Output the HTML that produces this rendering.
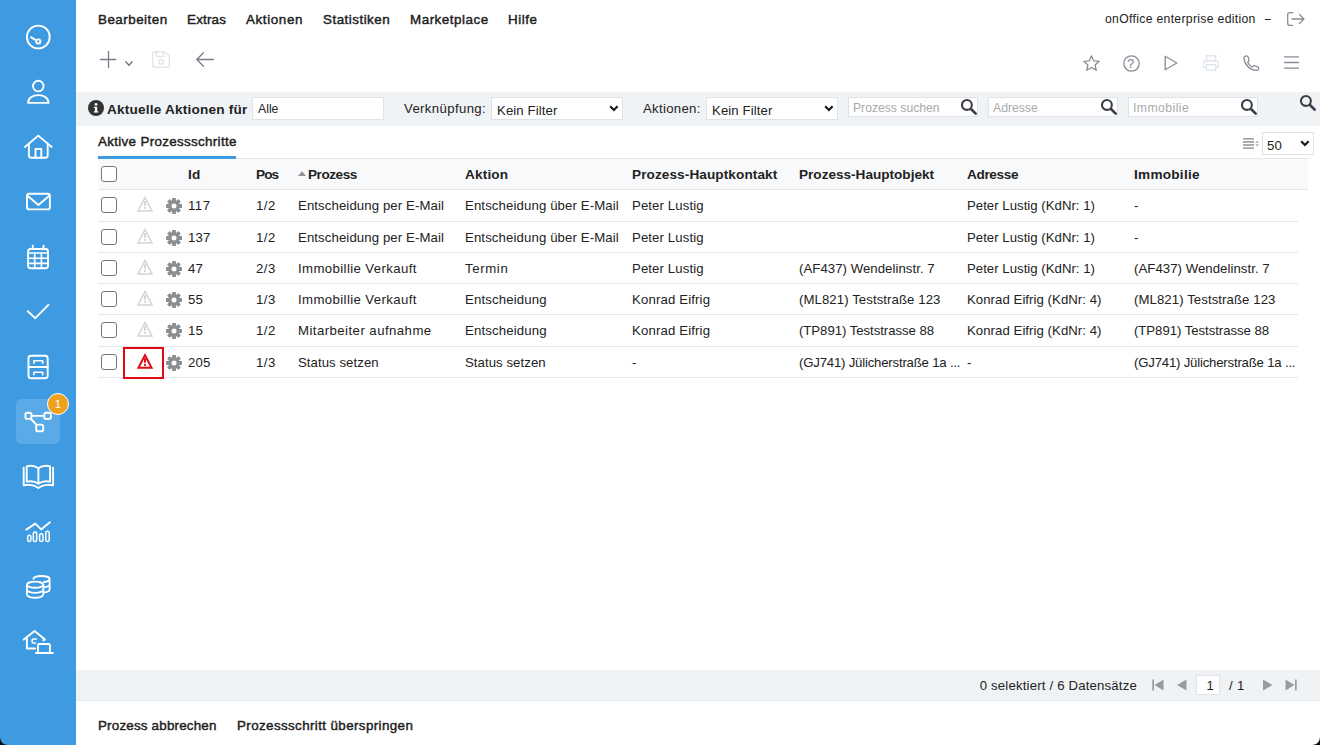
<!DOCTYPE html>
<html lang="de">
<head>
<meta charset="utf-8">
<title>onOffice enterprise edition</title>
<style>
*{box-sizing:border-box;margin:0;padding:0}
html,body{width:1320px;height:745px;overflow:hidden;background:#fff}
body{font-family:"Liberation Sans",sans-serif;font-size:13.2px;letter-spacing:.1px;color:#222;position:relative}
.abs{position:absolute}
#side{position:absolute;left:0;top:0;width:76px;height:745px;background:#3e9be1}
#side svg{position:absolute;overflow:visible;fill:none;stroke:#fff;stroke-width:1.9;stroke-linecap:round;stroke-linejoin:round}
#active{position:absolute;left:16px;top:399px;width:44px;height:45px;border-radius:5px;background:#5aaae7}
#badge{position:absolute;left:47px;top:393px;width:22px;height:22px;border:1px solid #fff;border-radius:50%;background:#f0a11e;color:#fff;font-size:11.5px;line-height:20px;text-align:center;letter-spacing:0}
.t{position:absolute;white-space:nowrap;line-height:16px;margin-top:1px}
.sb{font-weight:400;font-size:13.4px;letter-spacing:.32px;-webkit-text-stroke:.42px #1c1c1c}
.b{font-weight:700;font-size:13.6px;letter-spacing:0}
#filter{position:absolute;left:76px;top:92px;width:1244px;height:34px;background:#f0f3f6}
.inp{position:absolute;background:#fff;border:1px solid #dfe3e8;}
.ph{color:#a9a9a9}
#thead{position:absolute;left:98px;top:159px;width:1210px;height:31px;background:#f8f9fa;border-bottom:1px solid #e3e7eb}
.rl{position:absolute;left:98px;width:1200px;height:1px;background:#e3e7eb}
.cb{position:absolute;left:101px;width:16px;height:16px;border:1.4px solid #767676;border-radius:3px;background:#fff}

#foot{position:absolute;left:76px;top:670px;width:1244px;height:31px;background:#f0f3f6;border-bottom:1px solid #e4e8ec}
.ico{position:absolute;overflow:visible}
.corner{position:absolute;width:7px;height:7px;bottom:0}
</style>
</head>
<body>
<div id="side">
  <div id="active"></div>
  <svg style="left:0;top:0" width="76" height="745" viewBox="0 0 76 745">
<circle cx="38.3" cy="37" r="11.4"/><circle cx="38.3" cy="41.5" r="2.1"/><path d="M36.3 40.300L30.8 37.2"/>
<circle cx="38.3" cy="86.1" r="5.3"/><path d="M28.1 102.900C28.1 98.3 32.5 95.1 38.3 95.100S48.5 98.3 48.5 102.900Z"/>
<path d="M24.9 147L38.3 135.600L51.7 147"/><path d="M28.9 144.500V155.200Q28.9 157.7 31.4 157.700H45.200Q47.7 157.7 47.7 155.200V144.5"/><path d="M35.5 157.700V149H41.300V157.7"/>
<rect x="27" y="193.8" width="22.9" height="15.6" rx="2.2"/><path d="M27.6 195.800L38.4 205L49.3 195.8"/>
<rect x="28.1" y="249" width="19.9" height="19.2" rx="2.5"/><path d="M32.8 245.600V249M43.5 245.600V249"/><path stroke-width="1.6" d="M28.1 253H48M28.1 258.200H48M28.1 263.400H48M34.7 253V268.200M41.4 253V268.2"/>
<path d="M27.8 311.200L35.3 318.200L48.4 304.8"/>
<rect x="28.5" y="355.8" width="19.2" height="22.4" rx="2.5"/><path d="M28.5 367H47.7"/><path stroke-width="1.6" d="M33.9 363.300V360.800H42.700V363.300M33.9 374.800V372.300H42.700V374.8"/>
<rect x="25.4" y="412.8" width="6.1" height="6.1" rx="1.9"/><rect x="44.3" y="412.8" width="6.6" height="6.1" rx="1.9"/><rect x="36.2" y="424.6" width="7" height="6.7" rx="1.9"/><path d="M31.5 415.900H44.300M31 419L36.7 425"/>
<path d="M26.7 466.300C30.5 465.3 35 465.8 38.4 468.300C41.8 465.8 46.3 465.3 50.1 466.300V481.800C46.3 480.8 41.8 481.3 38.4 483.800C35 481.3 30.5 480.8 26.7 481.800ZM38.4 468.300V483.8"/><path d="M23.7 467.800V485.300C29 484.3 34.5 485 38.4 488C42.3 485 47.8 484.3 53.1 485.300V467.8"/>
<path d="M26.3 529.600L35.3 523.600L41.2 529.400L49.9 522.3"/><g stroke-width="1.5"><rect x="27.7" y="535.3" width="3.2" height="6.3" rx="1.6"/><rect x="33.3" y="532" width="3.4" height="9.6" rx="1.7"/><rect x="39.6" y="533.8" width="3.4" height="7.8" rx="1.7"/><rect x="45.8" y="531.3" width="3.4" height="10.3" rx="1.7"/></g>
<ellipse cx="35.1" cy="584.7" rx="8.2" ry="3.1"/><path d="M26.9 584.700V594.600C26.9 596.4 30.6 597.8 35.1 597.800S43.3 596.4 43.3 594.600V584.700M26.9 589.700C26.9 591.5 30.6 592.9 35.1 592.900S43.3 591.5 43.3 589.7"/><path d="M33.4 578.800C33.8 577.1 37.1 576 41.4 576C45.9 576 49.6 577.3 49.6 579V589.500C49.6 590.9 47.6 592 44.3 592.400M49.6 584.200C49.6 585.6 47.6 586.7 44.3 587.100M49.6 579C49.6 580.5 47.3 581.7 44 582"/>
<path d="M23.7 639.600L34.6 631L45 639.6"/><path d="M26.9 637.300V648.500H35.200M43.5 638V640.5"/><path stroke-width="1.6" d="M36.5 639H33.300Q32.1 639 32.1 640.200V641.800Q32.1 643 33.3 643H35.5"/><path d="M38 651.500V645Q38 644 39 644H48.900Q49.9 644 49.9 645V651.5"/><path stroke-width="2" d="M36 653H52.8"/>
</svg>
  <div id="badge">1</div>
</div>

<!-- top menu -->
<div class="t sb" style="left:98px;top:11px;letter-spacing:0.48px">Bearbeiten</div>
<div class="t sb" style="left:187px;top:11px;letter-spacing:0.20px">Extras</div>
<div class="t sb" style="left:246px;top:11px;letter-spacing:0.62px">Aktionen</div>
<div class="t sb" style="left:323px;top:11px;letter-spacing:0.49px">Statistiken</div>
<div class="t sb" style="left:410px;top:11px;letter-spacing:0.52px">Marketplace</div>
<div class="t sb" style="left:508px;top:11px;letter-spacing:0.54px">Hilfe</div>
<div class="t" style="left:1105px;top:10px;font-size:12.2px;letter-spacing:0.32px">onOffice enterprise edition</div>
<div class="t nf" style="left:1265px;top:10px;font-size:12.4px;-webkit-text-stroke:.3px #1c1c1c;transform:scaleX(.8);transform-origin:0 0">–</div>
<svg class="ico" style="left:100px;top:51px" width="17" height="17" viewBox="0 0 17 17" fill="none" stroke="#7a7c88" stroke-width="1.3" stroke-linecap="round" stroke-linejoin="round"><path d="M8.5 .5V16.500M.5 8.500H15.7"/></svg>
<svg class="ico" style="left:125px;top:61px" width="8" height="5" viewBox="0 0 8 5" fill="none" stroke="#6f717c" stroke-width="1.3" stroke-linecap="round" stroke-linejoin="round"><path d="M.8 .8L4 4.200L7.2 .8"/></svg>
<svg class="ico" style="left:152px;top:51px" width="18" height="17" viewBox="0 0 18 17" fill="none" stroke="#e1e6ed" stroke-width="1.4" stroke-linecap="round" stroke-linejoin="round"><path d="M3 .7H12.500L17.3 5V14.300Q17.3 16.3 15.3 16.300H3Q.7 16.3 .7 14.300V2.700Q.7 .7 3 .7Z"/><path d="M4.5 .9V5.500H11.500V.9"/><circle cx="9" cy="11" r="2.2"/></svg>
<svg class="ico" style="left:196px;top:52px" width="18" height="15" viewBox="0 0 18 15" fill="none" stroke="#7a7c88" stroke-width="1.3" stroke-linecap="round" stroke-linejoin="round"><path d="M17.5 7.500H1M7.5 .7L.8 7.500L7.5 14.3"/></svg>
<svg class="ico" style="left:1083px;top:55px" width="17" height="16" viewBox="0 0 17 16" fill="none" stroke="#8a8c95" stroke-width="1.3" stroke-linecap="round" stroke-linejoin="round"><path d="M8.5 .8L10.7 5.800L16.2 6.300L12.1 10L13.3 15.300L8.5 12.500L3.7 15.300L4.9 10L.8 6.300L6.3 5.800Z"/></svg>
<svg class="ico" style="left:1122.5px;top:54.5px" width="17" height="17" viewBox="0 0 17 17" fill="none" stroke="#8a8c95" stroke-width="1.3" stroke-linecap="round" stroke-linejoin="round"><circle cx="8.5" cy="8.5" r="7.7"/></svg>
<div class="t nf" style="left:1127.300px;top:54.500px;font-size:12.500px;color:#8a8c95;-webkit-text-stroke:.2px #8a8c95">?</div>
<svg class="ico" style="left:1164px;top:55px" width="14" height="16" viewBox="0 0 14 16" fill="none" stroke="#8a8c95" stroke-width="1.3" stroke-linecap="round" stroke-linejoin="round"><path d="M1.2 1.200L12.8 8L1.2 14.800Z"/></svg>
<svg class="ico" style="left:1203px;top:55px" width="16" height="16" viewBox="0 0 16 16" fill="none" stroke="#e1e6ed" stroke-width="1.4" stroke-linecap="round" stroke-linejoin="round"><path d="M3.5 6V.7H12.500V6"/><path d="M3.3 12.500H2Q.7 12.5 .7 11.200V7.300Q.7 6 2 6H14Q15.3 6 15.3 7.300V11.200Q15.3 12.5 14 12.500H12.7"/><rect x="3.4" y="9.7" width="9.2" height="5.6"/></svg>
<svg class="ico" style="left:1242.5px;top:55px" width="17" height="16" viewBox="0 0 17 16" fill="none" stroke="#8a8c95" stroke-width="1.3" stroke-linecap="round" stroke-linejoin="round"><path d="M1 3.300C1 1.5 2.5 .7 3.8 .8C4.5 .9 5 1.5 5.3 2.500L6 4.800C6.2 5.5 6 6 5.5 6.500L4.7 7.300C5.5 9.3 7.2 11 9.3 12L10.1 11.200C10.6 10.7 11.2 10.6 11.8 10.800L14.2 11.600C15.2 11.9 15.7 12.4 15.7 13.200C15.7 14.5 14.8 15.5 13.3 15.400C6.8 15 1.3 9.5 1 3.300Z"/></svg>
<svg class="ico" style="left:1284px;top:56px" width="15" height="13" viewBox="0 0 15 13" fill="none" stroke="#8a8c95" stroke-width="1.3" stroke-linecap="round" stroke-linejoin="round"><path d="M.5 .8H14.500M.5 6.500H14.500M.5 12.200H14.5"/></svg>
<svg class="ico" style="left:1287px;top:12px" width="18" height="14" viewBox="0 0 18 14" fill="none" stroke="#8a8c95" stroke-width="1.3" stroke-linecap="round" stroke-linejoin="round"><path d="M5.8 .7H2.700Q.7 .7 .7 2.700V11.300Q.7 13.3 2.7 13.300H5.8"/><path d="M5 7H17M12.5 2.500L17 7L12.5 11.5"/></svg>

<!-- filter bar -->
<div id="filter"></div>
<svg class="ico" style="left:88px;top:100px" width="16" height="16" viewBox="0 0 16 16"><circle cx="8" cy="8" r="8" fill="#333"/><rect x="6.9" y="6.8" width="2.3" height="5.4" fill="#fff"/><rect x="5.9" y="6.8" width="2" height="1.2" fill="#fff"/><rect x="5.8" y="11.3" width="4.5" height="1.2" fill="#fff"/><circle cx="8" cy="4.3" r="1.4" fill="#fff"/></svg>
<div class="t b" style="left:107px;top:101px;letter-spacing:0.20px">Aktuelle Aktionen für</div>
<div class="inp" style="left:252px;top:97px;width:132px;height:23px"></div>
<div class="t" style="left:258px;top:100px;font-size:12.2px;letter-spacing:0.02px">Alle</div>
<div class="t" style="left:404px;top:100px;font-size:13.2px;letter-spacing:0.36px">Verknüpfung:</div>
<div class="inp" style="left:491px;top:97px;width:132px;height:23px"></div>
<div class="t" style="left:497px;top:102px;font-size:13.2px;letter-spacing:0.10px">Kein Filter</div>
<svg class="ico" style="left:609px;top:104.7px" width="10" height="7" viewBox="0 0 10 7"><path d="M1.2 1.200L4.9 5L8.6 1.2" fill="none" stroke="#15151c" stroke-width="2.1"/></svg>
<div class="t" style="left:643px;top:100px;font-size:13.2px;letter-spacing:0.29px">Aktionen:</div>
<div class="inp" style="left:706px;top:97px;width:132px;height:23px"></div>
<div class="t" style="left:712px;top:102px;font-size:13.2px;letter-spacing:0.10px">Kein Filter</div>
<svg class="ico" style="left:824px;top:104.7px" width="10" height="7" viewBox="0 0 10 7"><path d="M1.2 1.200L4.9 5L8.6 1.2" fill="none" stroke="#15151c" stroke-width="2.1"/></svg>
<div class="inp" style="left:848px;top:97px;width:130px;height:20px"></div>
<div class="t ph" style="left:853px;top:99px;font-size:12.2px;letter-spacing:-0.01px">Prozess suchen</div>
<svg class="ico" style="left:961px;top:99px" width="16" height="16" viewBox="0 0 16 16"><circle cx="5.9" cy="5.9" r="4.950" fill="none" stroke="#3b3e44" stroke-width="2.1"/><path d="M10 10L14.7 14.6" stroke="#3b3e44" stroke-width="2.7" stroke-linecap="round"/></svg>
<div class="inp" style="left:988px;top:97px;width:130px;height:20px"></div>
<div class="t ph" style="left:993px;top:99px;font-size:12.2px;letter-spacing:0.00px">Adresse</div>
<svg class="ico" style="left:1101px;top:99px" width="16" height="16" viewBox="0 0 16 16"><circle cx="5.9" cy="5.9" r="4.950" fill="none" stroke="#3b3e44" stroke-width="2.1"/><path d="M10 10L14.7 14.6" stroke="#3b3e44" stroke-width="2.7" stroke-linecap="round"/></svg>
<div class="inp" style="left:1128px;top:97px;width:130px;height:20px"></div>
<div class="t ph" style="left:1133px;top:99px;font-size:12.2px;letter-spacing:0.45px">Immobilie</div>
<svg class="ico" style="left:1241px;top:99px" width="16" height="16" viewBox="0 0 16 16"><circle cx="5.9" cy="5.9" r="4.950" fill="none" stroke="#3b3e44" stroke-width="2.1"/><path d="M10 10L14.7 14.6" stroke="#3b3e44" stroke-width="2.7" stroke-linecap="round"/></svg>
<svg class="ico" style="left:1300.2px;top:94.7px" width="16" height="16" viewBox="0 0 16 16"><circle cx="5.9" cy="5.9" r="4.950" fill="none" stroke="#3b3e44" stroke-width="2.1"/><path d="M10 10L14.7 14.6" stroke="#3b3e44" stroke-width="2.7" stroke-linecap="round"/></svg>

<!-- tab -->
<div class="t sb" style="left:98px;top:133px;letter-spacing:0.32px">Aktive Prozessschritte</div>
<div class="abs" style="left:98px;top:158px;width:1210px;height:1px;background:#e3e7eb"></div>
<div class="abs" style="left:98px;top:156px;width:138px;height:3px;background:#3e9be1"></div>
<svg class="ico" style="left:1243px;top:138px" width="17" height="12" viewBox="0 0 17 12"><g fill="#999"><rect x="0" y=".1" width="11" height="1.5"/><rect x="0" y="3.1" width="11" height="1.6"/><rect x="0" y="6.2" width="11" height="1.6"/><rect x="0" y="9.3" width="11" height="1.5"/><path d="M12.2 4.700L14.1 2.500L16 4.700ZM12.2 6.300L14.1 8.400L16 6.300Z" fill="#aaa"/></g></svg>
<div class="inp" style="left:1262px;top:132px;width:52px;height:23px"></div>
<div class="t" style="left:1267px;top:137px;font-size:13.2px;letter-spacing:0.14px">50</div>
<svg class="ico" style="left:1300px;top:139.7px" width="10" height="7" viewBox="0 0 10 7"><path d="M1.2 1.200L4.9 5L8.6 1.2" fill="none" stroke="#15151c" stroke-width="2.1"/></svg>

<!-- table -->
<div id="thead"></div>
<div class="cb" style="top:166px"></div>
<div class="t b hd" style="left:188px;top:166px;letter-spacing:0.29px">Id</div>
<div class="t b hd" style="left:256px;top:166px;letter-spacing:-0.90px">Pos</div>
<svg class="ico" style="left:298px;top:171px" width="8" height="6" viewBox="0 0 8 6"><path d="M0 5L4 .3L8 5Z" fill="#909097"/></svg>
<div class="t b hd" style="left:308px;top:166px;letter-spacing:-0.47px">Prozess</div>
<div class="t b hd" style="left:465px;top:166px;letter-spacing:0.17px">Aktion</div>
<div class="t b hd" style="left:632px;top:166px;letter-spacing:0.09px">Prozess-Hauptkontakt</div>
<div class="t b hd" style="left:799px;top:166px;letter-spacing:-0.01px">Prozess-Hauptobjekt</div>
<div class="t b hd" style="left:967px;top:166px;letter-spacing:-0.35px">Adresse</div>
<div class="t b hd" style="left:1134px;top:166px;letter-spacing:0.26px">Immobilie</div>
<div class="rl" style="top:221px"></div>
<div class="cb" style="top:197px"></div>
<svg class="ico" style="left:136px;top:196.05px" width="18" height="16" viewBox="0 0 18 16"><path d="M9.00 0.00L17.20 15.80L0.80 15.80ZM9.00 3.15L14.81 14.35L3.19 14.35Z" fill="#d2d4d6" fill-rule="evenodd"/><rect x="8" y="5.3" width="2" height="4.4" fill="#d2d4d6"/><rect x="8" y="10.9" width="2" height="1.9" fill="#d2d4d6"/></svg>
<svg class="ico" style="left:166px;top:198.0px" width="16" height="16" viewBox="0 0 16 16"><g transform="translate(8 8)" fill="#8b8e91"><rect x="-1.9" y="-8" width="3.8" height="16" rx=".6" transform="rotate(0)"/><rect x="-1.9" y="-8" width="3.8" height="16" rx=".6" transform="rotate(45)"/><rect x="-1.9" y="-8" width="3.8" height="16" rx=".6" transform="rotate(90)"/><rect x="-1.9" y="-8" width="3.8" height="16" rx=".6" transform="rotate(135)"/><circle r="5.9"/><circle r="2.5" fill="#fff"/></g></svg>
<div class="t" style="left:188px;top:197px;font-size:13.2px;letter-spacing:0.51px">117</div>
<div class="t" style="left:256px;top:197px;font-size:13.2px;letter-spacing:0.52px">1/2</div>
<div class="t" style="left:298px;top:197px;font-size:13.2px;letter-spacing:0.10px">Entscheidung per E-Mail</div>
<div class="t" style="left:465px;top:197px;font-size:13.2px;letter-spacing:0.12px">Entscheidung über E-Mail</div>
<div class="t" style="left:632px;top:197px;font-size:13.2px;letter-spacing:0.11px">Peter Lustig</div>
<div class="t" style="left:967px;top:197px;font-size:13.2px;letter-spacing:0.02px">Peter Lustig (KdNr: 1)</div>
<div class="t" style="left:1134px;top:197px;font-size:13.2px;letter-spacing:-0.22px">-</div>
<div class="rl" style="top:252px"></div>
<div class="cb" style="top:229px"></div>
<svg class="ico" style="left:136px;top:228.05px" width="18" height="16" viewBox="0 0 18 16"><path d="M9.00 0.00L17.20 15.80L0.80 15.80ZM9.00 3.15L14.81 14.35L3.19 14.35Z" fill="#d2d4d6" fill-rule="evenodd"/><rect x="8" y="5.3" width="2" height="4.4" fill="#d2d4d6"/><rect x="8" y="10.9" width="2" height="1.9" fill="#d2d4d6"/></svg>
<svg class="ico" style="left:166px;top:230.0px" width="16" height="16" viewBox="0 0 16 16"><g transform="translate(8 8)" fill="#8b8e91"><rect x="-1.9" y="-8" width="3.8" height="16" rx=".6" transform="rotate(0)"/><rect x="-1.9" y="-8" width="3.8" height="16" rx=".6" transform="rotate(45)"/><rect x="-1.9" y="-8" width="3.8" height="16" rx=".6" transform="rotate(90)"/><rect x="-1.9" y="-8" width="3.8" height="16" rx=".6" transform="rotate(135)"/><circle r="5.9"/><circle r="2.5" fill="#fff"/></g></svg>
<div class="t" style="left:188px;top:229px;font-size:13.2px;letter-spacing:0.12px">137</div>
<div class="t" style="left:256px;top:229px;font-size:13.2px;letter-spacing:0.52px">1/2</div>
<div class="t" style="left:298px;top:229px;font-size:13.2px;letter-spacing:0.10px">Entscheidung per E-Mail</div>
<div class="t" style="left:465px;top:229px;font-size:13.2px;letter-spacing:0.12px">Entscheidung über E-Mail</div>
<div class="t" style="left:632px;top:229px;font-size:13.2px;letter-spacing:0.11px">Peter Lustig</div>
<div class="t" style="left:967px;top:229px;font-size:13.2px;letter-spacing:0.02px">Peter Lustig (KdNr: 1)</div>
<div class="t" style="left:1134px;top:229px;font-size:13.2px;letter-spacing:-0.22px">-</div>
<div class="rl" style="top:283px"></div>
<div class="cb" style="top:260px"></div>
<svg class="ico" style="left:136px;top:259.05px" width="18" height="16" viewBox="0 0 18 16"><path d="M9.00 0.00L17.20 15.80L0.80 15.80ZM9.00 3.15L14.81 14.35L3.19 14.35Z" fill="#d2d4d6" fill-rule="evenodd"/><rect x="8" y="5.3" width="2" height="4.4" fill="#d2d4d6"/><rect x="8" y="10.9" width="2" height="1.9" fill="#d2d4d6"/></svg>
<svg class="ico" style="left:166px;top:261.0px" width="16" height="16" viewBox="0 0 16 16"><g transform="translate(8 8)" fill="#8b8e91"><rect x="-1.9" y="-8" width="3.8" height="16" rx=".6" transform="rotate(0)"/><rect x="-1.9" y="-8" width="3.8" height="16" rx=".6" transform="rotate(45)"/><rect x="-1.9" y="-8" width="3.8" height="16" rx=".6" transform="rotate(90)"/><rect x="-1.9" y="-8" width="3.8" height="16" rx=".6" transform="rotate(135)"/><circle r="5.9"/><circle r="2.5" fill="#fff"/></g></svg>
<div class="t" style="left:188px;top:260px;font-size:13.2px;letter-spacing:0.14px">47</div>
<div class="t" style="left:256px;top:260px;font-size:13.2px;letter-spacing:0.52px">2/3</div>
<div class="t" style="left:298px;top:260px;font-size:13.2px;letter-spacing:0.39px">Immobillie Verkauft</div>
<div class="t" style="left:465px;top:260px;font-size:13.2px;letter-spacing:0.63px">Termin</div>
<div class="t" style="left:632px;top:260px;font-size:13.2px;letter-spacing:0.11px">Peter Lustig</div>
<div class="t" style="left:799px;top:260px;font-size:13.2px;letter-spacing:0.05px">(AF437) Wendelinstr. 7</div>
<div class="t" style="left:967px;top:260px;font-size:13.2px;letter-spacing:0.02px">Peter Lustig (KdNr: 1)</div>
<div class="t" style="left:1134px;top:260px;font-size:13.2px;letter-spacing:0.05px">(AF437) Wendelinstr. 7</div>
<div class="rl" style="top:314px"></div>
<div class="cb" style="top:291px"></div>
<svg class="ico" style="left:136px;top:290.05px" width="18" height="16" viewBox="0 0 18 16"><path d="M9.00 0.00L17.20 15.80L0.80 15.80ZM9.00 3.15L14.81 14.35L3.19 14.35Z" fill="#d2d4d6" fill-rule="evenodd"/><rect x="8" y="5.3" width="2" height="4.4" fill="#d2d4d6"/><rect x="8" y="10.9" width="2" height="1.9" fill="#d2d4d6"/></svg>
<svg class="ico" style="left:166px;top:292.0px" width="16" height="16" viewBox="0 0 16 16"><g transform="translate(8 8)" fill="#8b8e91"><rect x="-1.9" y="-8" width="3.8" height="16" rx=".6" transform="rotate(0)"/><rect x="-1.9" y="-8" width="3.8" height="16" rx=".6" transform="rotate(45)"/><rect x="-1.9" y="-8" width="3.8" height="16" rx=".6" transform="rotate(90)"/><rect x="-1.9" y="-8" width="3.8" height="16" rx=".6" transform="rotate(135)"/><circle r="5.9"/><circle r="2.5" fill="#fff"/></g></svg>
<div class="t" style="left:188px;top:291px;font-size:13.2px;letter-spacing:0.14px">55</div>
<div class="t" style="left:256px;top:291px;font-size:13.2px;letter-spacing:0.52px">1/3</div>
<div class="t" style="left:298px;top:291px;font-size:13.2px;letter-spacing:0.39px">Immobillie Verkauft</div>
<div class="t" style="left:465px;top:291px;font-size:13.2px;letter-spacing:0.16px">Entscheidung</div>
<div class="t" style="left:632px;top:291px;font-size:13.2px;letter-spacing:0.15px">Konrad Eifrig</div>
<div class="t" style="left:799px;top:291px;font-size:13.2px;letter-spacing:0.08px">(ML821) Teststraße 123</div>
<div class="t" style="left:967px;top:291px;font-size:13.2px;letter-spacing:0.05px">Konrad Eifrig (KdNr: 4)</div>
<div class="t" style="left:1134px;top:291px;font-size:13.2px;letter-spacing:0.08px">(ML821) Teststraße 123</div>
<div class="rl" style="top:346px"></div>
<div class="cb" style="top:322px"></div>
<svg class="ico" style="left:136px;top:321.05px" width="18" height="16" viewBox="0 0 18 16"><path d="M9.00 0.00L17.20 15.80L0.80 15.80ZM9.00 3.15L14.81 14.35L3.19 14.35Z" fill="#d2d4d6" fill-rule="evenodd"/><rect x="8" y="5.3" width="2" height="4.4" fill="#d2d4d6"/><rect x="8" y="10.9" width="2" height="1.9" fill="#d2d4d6"/></svg>
<svg class="ico" style="left:166px;top:323.0px" width="16" height="16" viewBox="0 0 16 16"><g transform="translate(8 8)" fill="#8b8e91"><rect x="-1.9" y="-8" width="3.8" height="16" rx=".6" transform="rotate(0)"/><rect x="-1.9" y="-8" width="3.8" height="16" rx=".6" transform="rotate(45)"/><rect x="-1.9" y="-8" width="3.8" height="16" rx=".6" transform="rotate(90)"/><rect x="-1.9" y="-8" width="3.8" height="16" rx=".6" transform="rotate(135)"/><circle r="5.9"/><circle r="2.5" fill="#fff"/></g></svg>
<div class="t" style="left:188px;top:322px;font-size:13.2px;letter-spacing:0.14px">15</div>
<div class="t" style="left:256px;top:322px;font-size:13.2px;letter-spacing:0.52px">1/2</div>
<div class="t" style="left:298px;top:322px;font-size:13.2px;letter-spacing:0.45px">Mitarbeiter aufnahme</div>
<div class="t" style="left:465px;top:322px;font-size:13.2px;letter-spacing:0.16px">Entscheidung</div>
<div class="t" style="left:632px;top:322px;font-size:13.2px;letter-spacing:0.15px">Konrad Eifrig</div>
<div class="t" style="left:799px;top:322px;font-size:13.2px;letter-spacing:-0.05px">(TP891) Teststrasse 88</div>
<div class="t" style="left:967px;top:322px;font-size:13.2px;letter-spacing:0.05px">Konrad Eifrig (KdNr: 4)</div>
<div class="t" style="left:1134px;top:322px;font-size:13.2px;letter-spacing:-0.05px">(TP891) Teststrasse 88</div>
<div class="rl" style="top:377px"></div>
<div class="cb" style="top:354px"></div>
<div class="abs" style="left:123px;top:347px;width:41px;height:32px;border:2px solid #df0a16"></div>
<svg class="ico" style="left:136px;top:353.05px" width="18" height="16" viewBox="0 0 18 16"><path d="M9.00 0.00L17.20 15.80L0.80 15.80ZM9.00 4.34L13.91 13.80L4.09 13.80Z" fill="#df0a16" fill-rule="evenodd"/><rect x="8" y="5.3" width="2" height="4.4" fill="#df0a16"/><rect x="8" y="10.9" width="2" height="1.9" fill="#df0a16"/></svg>
<svg class="ico" style="left:166px;top:355.0px" width="16" height="16" viewBox="0 0 16 16"><g transform="translate(8 8)" fill="#8b8e91"><rect x="-1.9" y="-8" width="3.8" height="16" rx=".6" transform="rotate(0)"/><rect x="-1.9" y="-8" width="3.8" height="16" rx=".6" transform="rotate(45)"/><rect x="-1.9" y="-8" width="3.8" height="16" rx=".6" transform="rotate(90)"/><rect x="-1.9" y="-8" width="3.8" height="16" rx=".6" transform="rotate(135)"/><circle r="5.9"/><circle r="2.5" fill="#fff"/></g></svg>
<div class="t" style="left:188px;top:354px;font-size:13.2px;letter-spacing:0.12px">205</div>
<div class="t" style="left:256px;top:354px;font-size:13.2px;letter-spacing:0.52px">1/3</div>
<div class="t" style="left:298px;top:354px;font-size:13.2px;letter-spacing:0.06px">Status setzen</div>
<div class="t" style="left:465px;top:354px;font-size:13.2px;letter-spacing:0.06px">Status setzen</div>
<div class="t" style="left:632px;top:354px;font-size:13.2px;letter-spacing:-0.22px">-</div>
<div class="t" style="left:799px;top:354px;font-size:13.2px;letter-spacing:-0.20px">(GJ741) Jülicherstraße 1a ...</div>
<div class="t" style="left:967px;top:354px;font-size:13.2px;letter-spacing:-0.22px">-</div>
<div class="t" style="left:1134px;top:354px;font-size:13.2px;letter-spacing:-0.20px">(GJ741) Jülicherstraße 1a ...</div>

<!-- footer -->
<div id="foot"></div>
<div class="t" style="right:183px;top:677px;font-size:13.2px;letter-spacing:0.18px">0 selektiert / 6 Datensätze</div>
<svg class="ico" style="left:1152px;top:679px" width="12" height="12" viewBox="0 0 12 12"><rect x=".3" y=".5" width="1.7" height="11" fill="#9b9b9b"/><path d="M11.5 .5V11.500L2.5 6Z" fill="#9b9b9b"/></svg>
<svg class="ico" style="left:1176px;top:679px" width="12" height="12" viewBox="0 0 12 12"><path d="M10.5 .5V11.500L1 6Z" fill="#9b9b9b"/></svg>
<div class="inp" style="left:1196px;top:675px;width:24px;height:20px"></div>
<div class="t" style="left:1206.500px;top:677px;font-size:13.2px;letter-spacing:0.09px">1</div>
<div class="t" style="left:1229px;top:677px;font-size:13.2px;letter-spacing:0.36px">/ 1</div>
<svg class="ico" style="left:1262px;top:679px" width="12" height="12" viewBox="0 0 12 12"><path d="M1 .5V11.500L10.5 6Z" fill="#9b9b9b"/></svg>
<svg class="ico" style="left:1285px;top:679px" width="12" height="12" viewBox="0 0 12 12"><rect x="10" y=".5" width="1.7" height="11" fill="#9b9b9b"/><path d="M.5 .5V11.500L9.5 6Z" fill="#9b9b9b"/></svg>

<div class="t sb" style="left:98px;top:717px;letter-spacing:0.19px">Prozess abbrechen</div>
<div class="t sb" style="left:237px;top:717px;letter-spacing:0.38px">Prozessschritt überspringen</div>

<div class="corner" style="left:0;background:radial-gradient(circle at 100% 0,transparent 6.2px,#0b0b0b 7.2px)"></div>
<div class="corner" style="right:0;background:radial-gradient(circle at 0 0,transparent 6.2px,#0b0b0b 7.2px)"></div>
</body>
</html>
